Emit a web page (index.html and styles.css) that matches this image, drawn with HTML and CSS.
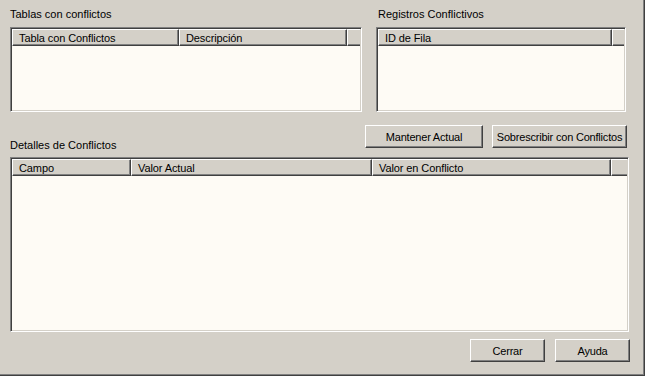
FILE: index.html
```html
<!DOCTYPE html>
<html lang="es">
<head>
  <meta charset="UTF-8" />
  <title>Conflictos</title>
  <link rel="stylesheet" href="styles.css">
</head>
<body>
  <div class="window">
    <div class="top-row">
      <div class="group group-tables">
        <div class="label">Tablas con conflictos</div>
        <div class="listview list-tables">
          <div class="lv-header">
            <div class="lv-col" style="width: 167px">Tabla con Conflictos</div>
            <div class="lv-col" style="width: 168px">Descripción</div>
            <div class="lv-col lv-filler"></div>
          </div>
        </div>
      </div>
      <div class="group group-rows">
        <div class="label">Registros Conflictivos</div>
        <div class="listview list-rows">
          <div class="lv-header">
            <div class="lv-col" style="width: 234px">ID de Fila</div>
            <div class="lv-col lv-filler"></div>
          </div>
        </div>
      </div>
    </div>

    <div class="mid-row">
      <div class="label label-details">Detalles de Conflictos</div>
      <div class="btn-group">
        <button class="btn btn-keep">Mantener Actual</button>
        <button class="btn btn-overwrite">Sobrescribir con Conflictos</button>
      </div>
    </div>

    <div class="listview list-details">
      <div class="lv-header">
        <div class="lv-col" style="width: 119px">Campo</div>
        <div class="lv-col" style="width: 241px">Valor Actual</div>
        <div class="lv-col" style="width: 239px">Valor en Conflicto</div>
        <div class="lv-col lv-filler"></div>
      </div>
    </div>

    <div class="bottom-row">
      <button class="btn btn-small">Cerrar</button>
      <button class="btn btn-small">Ayuda</button>
    </div>
  </div>
</body>
</html>
```

FILE: styles.css
```css
body {
  margin: 0;
  background: #d4d0c8;
  font-family: 'Liberation Sans', Arial, sans-serif;
  font-size: 11px;
  color: #000;
}

.window {
  width: 645px;
  height: 376px;
  box-sizing: border-box;
  padding: 8px 0 0 10px;
  background: #d4d0c8;
  border-right: 1px solid #404040;
  border-bottom: 1px solid #404040;
  box-shadow: inset -1px -1px 0 #808080;
  overflow: hidden;
}

.label {
  line-height: 13px;
  height: 13px;
  white-space: nowrap;
}

.top-row {
  display: flex;
  gap: 14px;
}

.group .label {
  margin-bottom: 6px;
}

.group-rows .label {
  padding-left: 2px;
}

/* sunken list view */
.listview {
  box-sizing: border-box;
  background: #fefbf5;
  border-top: 1px solid #808080;
  border-left: 1px solid #808080;
  border-right: 1px solid #fff;
  border-bottom: 1px solid #fff;
  box-shadow: inset 1px 1px 0 #404040, inset -1px -1px 0 #d4d0c8;
  padding: 1px;
  overflow: hidden;
}

.list-tables {
  width: 352px;
  height: 85px;
}

.list-rows {
  width: 250px;
  height: 85px;
}

.list-details {
  width: 619px;
  height: 175px;
  margin-top: 5px;
}

.lv-header {
  display: flex;
  height: 17px;
}

.lv-col {
  box-sizing: border-box;
  flex: none;
  height: 17px;
  line-height: 16px;
  padding-left: 6px;
  letter-spacing: -0.1px;
  background: #d4d0c8;
  border-top: 1px solid #fff;
  border-left: 1px solid #fff;
  border-right: 1px solid #404040;
  border-bottom: 1px solid #404040;
  box-shadow: inset -1px -1px 0 #808080;
  white-space: nowrap;
  overflow: hidden;
}

.lv-filler {
  flex: 1;
  border-right: none;
  box-shadow: inset 0 -1px 0 #808080;
}

.mid-row {
  display: flex;
  align-items: flex-start;
  margin-top: 13px;
}

.label-details {
  margin-top: 14px;
}

.btn-group {
  display: flex;
  gap: 9px;
  margin-left: auto;
  margin-right: 17px;
}

.btn {
  box-sizing: border-box;
  height: 23px;
  padding: 0;
  font-family: inherit;
  font-size: 11px;
  letter-spacing: -0.2px;
  color: #000;
  background: #d4d0c8;
  border-top: 1px solid #fff;
  border-left: 1px solid #fff;
  border-right: 1px solid #404040;
  border-bottom: 1px solid #404040;
  box-shadow: inset -1px -1px 0 #808080;
  white-space: nowrap;
}

.btn-keep {
  width: 118px;
}

.btn-overwrite {
  width: 135px;
}

.bottom-row {
  display: flex;
  justify-content: flex-end;
  gap: 10px;
  margin-top: 7px;
  margin-right: 14px;
}

.btn-small {
  width: 75px;
}
```
